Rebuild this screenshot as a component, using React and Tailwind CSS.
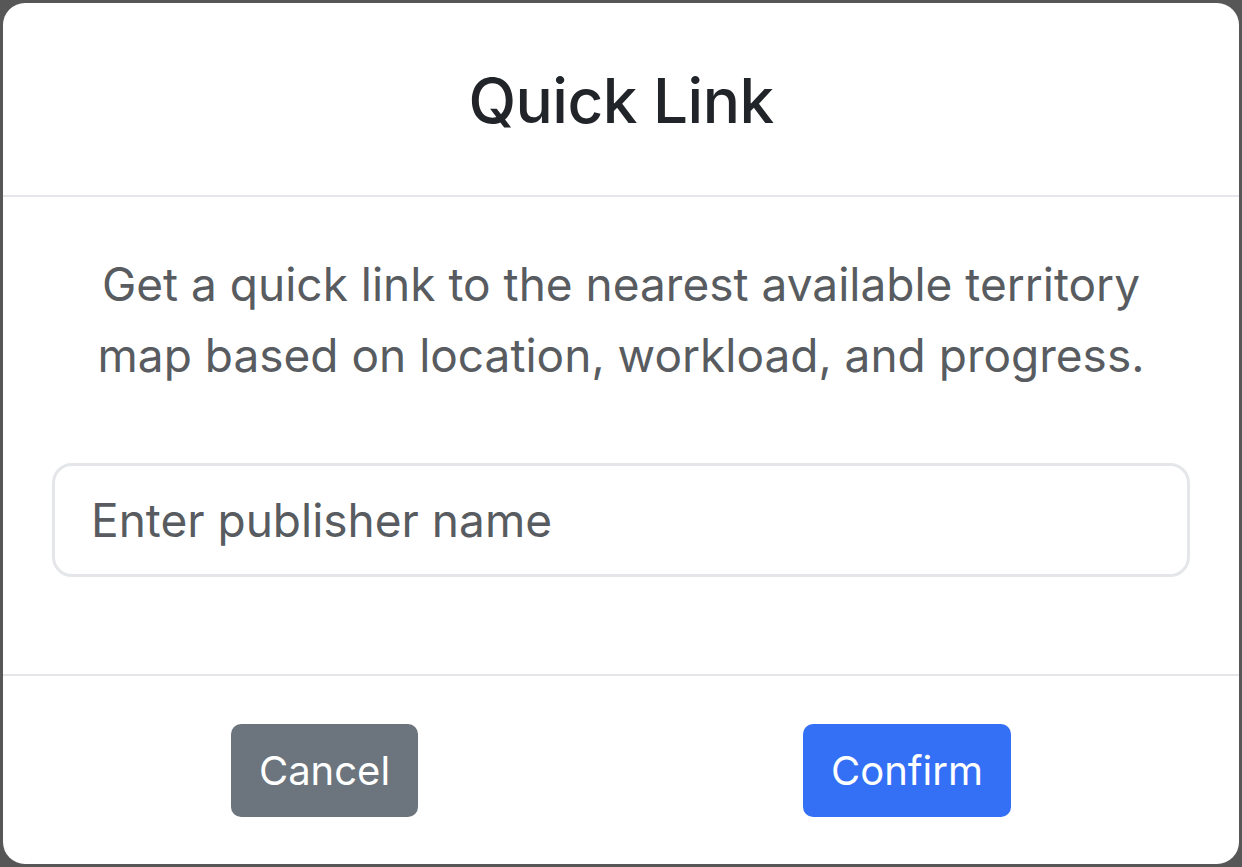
export default function App() {
  return (
    <div className="h-[867px] w-[1242px] bg-[#575757] p-[3px]" style={{ fontFamily: "Inter, 'Noto Sans', sans-serif" }}>
      <div className="flex h-full w-full flex-col rounded-[22px] bg-white">
        <div className="flex h-[194px] items-center justify-center border-b-2 border-[#e4e6e9]">
          <h1 className="pt-[4px] text-[62px] font-medium leading-none text-[#212529] tracking-[-0.5px]">Quick Link</h1>
        </div>
        <div className="flex flex-col items-center px-[49px] pt-[52px]">
          <p className="text-center text-[46px] leading-[71px] text-[#585c60]">
            Get a quick link to the nearest available territory<br />map based on location, workload, and progress.
          </p>
          <input
            type="text"
            placeholder="Enter publisher name"
            className="mt-[72px] h-[114px] w-full rounded-[20px] border-[3px] border-[#e4e6e9] px-[36px] text-[46px] text-[#585c60] placeholder:text-[#585c60] outline-none"
          />
        </div>
        <div className="mt-[97px] border-t-2 border-[#e4e6e9]" />
        <div className="flex flex-1 items-start justify-between px-[228px] pt-[48px]">
          <button className="h-[93px] w-[187px] rounded-[10px] bg-[#6c757d] text-[40px] text-white">Cancel</button>
          <button className="h-[93px] w-[208px] rounded-[10px] bg-[#3370f6] text-[40px] text-white">Confirm</button>
        </div>
      </div>
    </div>
  );
}
